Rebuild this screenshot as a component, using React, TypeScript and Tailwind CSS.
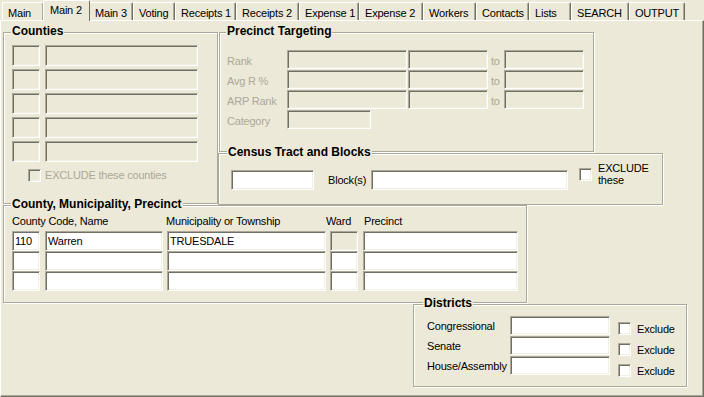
import React from 'react';

const sunken =
  'box-border border border-t-[#ACA899] border-l-[#ACA899] border-r-white border-b-white shadow-[inset_1px_1px_0_#716F64,inset_-1px_-1px_0_#F1EFE2]';

const Field = ({ className = '', value = '', disabled = false }: { className?: string; value?: string; disabled?: boolean }) => (
  <div className={`${sunken} ${disabled ? 'bg-[#ECE9D8]' : 'bg-white'} flex items-center pl-[2px] overflow-hidden ${className}`}>
    {value}
  </div>
);

const Check = ({ disabled = false }: { disabled?: boolean }) => (
  <div className={`${sunken} w-[13px] h-[13px] shrink-0 ${disabled ? 'bg-[#ECE9D8]' : 'bg-white'}`} />
);

const Group = ({
  title,
  className = '',
  titleClass = 'left-[7px]',
  children,
}: {
  title: string;
  className?: string;
  titleClass?: string;
  children?: React.ReactNode;
}) => (
  <div className={`relative box-border border border-[#ACA899] shadow-[inset_1px_1px_0_#fff,1px_1px_0_#fff] ${className}`}>
    <span className={`absolute top-[-9px] px-[1px] bg-[#ECE9D8] font-bold text-[12px] leading-[14px] tracking-normal ${titleClass}`}>
      {title}
    </span>
    {children}
  </div>
);

const tabs = [
  { label: 'Main', w: 'w-[42px]' },
  { label: 'Main 2', w: 'w-[47px]', active: true },
  { label: 'Main 3', w: 'w-[44px]' },
  { label: 'Voting', w: 'w-[42px]' },
  { label: 'Receipts 1', w: 'w-[61px]' },
  { label: 'Receipts 2', w: 'w-[63px]' },
  { label: 'Expense 1', w: 'w-[60px]' },
  { label: 'Expense 2', w: 'w-[64px]' },
  { label: 'Workers', w: 'w-[53px]' },
  { label: 'Contacts', w: 'w-[53px]' },
  { label: 'Lists', w: 'w-[42px]' },
  { label: 'SEARCH', w: 'w-[58px]' },
  { label: 'OUTPUT', w: 'w-[56px]' },
];

const targetRows = ['Rank', 'Avg R %', 'ARP Rank'];

const cmpRows = [
  { code: '110', name: 'Warren', muni: 'TRUESDALE', wardDisabled: true },
  { code: '', name: '', muni: '', wardDisabled: false },
  { code: '', name: '', muni: '', wardDisabled: false },
];

const districts = ['Congressional', 'Senate', 'House/Assembly'];

export default function App() {
  return (
    <div className="w-[704px] h-[397px] overflow-hidden bg-[#ECE9D8] text-black text-[11px] leading-[13px] tracking-[-0.2px] font-['Liberation_Sans',Arial,sans-serif]">
      {/* tab strip */}
      <div className="flex items-end h-[20px] pl-[2px]">
        {tabs.map((t) =>
          t.active ? (
            <div
              key={t.label}
              className={`${t.w} relative z-10 -mx-[1px] mb-[-1px] h-[21px] box-border bg-[#ECE9D8] border-t border-l border-white border-r border-r-[#716F64] rounded-t-[2px] pl-[6px] pt-[3px] whitespace-nowrap`}
            >
              {t.label}
            </div>
          ) : (
            <div
              key={t.label}
              className={`${t.w} h-[18px] box-border border-t border-l border-white border-r border-r-[#716F64] shadow-[inset_-1px_0_0_#ACA899] rounded-t-[2px] pl-[5px] pt-[4px] whitespace-nowrap`}
            >
              {t.label}
            </div>
          )
        )}
      </div>

      {/* tab page */}
      <div className="h-[377px] box-border border border-t-white border-l-white border-r-[#716F64] border-b-[#716F64] shadow-[inset_-1px_-1px_0_#ACA899] pl-[2px] pt-[11px]">
        <div className="flex items-start">
          <Group title="Counties" className="w-[215px] h-[172px] pl-[8px] pt-[12px]">
            <div className="flex flex-col gap-[3px]">
              {[0, 1, 2, 3, 4].map((i) => (
                <div key={i} className="flex gap-[5px]">
                  <Field className="w-[28px] h-[21px]" disabled />
                  <Field className="w-[153px] h-[21px]" disabled />
                </div>
              ))}
            </div>
            <div className="flex items-center gap-[4px] mt-[6px] ml-[16px] text-[#ACA899]">
              <Check disabled />
              <span className="pt-[1px]">EXCLUDE these counties</span>
            </div>
          </Group>

          <div className="flex flex-col">
            <Group title="Precinct Targeting" titleClass="left-[6px]" className="ml-[1px] w-[375px] h-[120px] pl-[7px] pt-[17px]">
              <div className="flex flex-col gap-[1px]">
                {targetRows.map((r) => (
                  <div key={r} className="flex items-center h-[19px]">
                    <span className="w-[60px] pt-[3px] text-[#ACA899]">{r}</span>
                    <Field className="w-[120px] h-[19px]" disabled />
                    <Field className="ml-[1px] w-[80px] h-[19px]" disabled />
                    <span className="w-[16px] pl-[3px] pt-[3px] text-[#ACA899]">to</span>
                    <Field className="w-[80px] h-[19px]" disabled />
                  </div>
                ))}
                <div className="flex items-center h-[19px]">
                  <span className="w-[60px] pt-[3px] text-[#ACA899]">Category</span>
                  <Field className="w-[84px] h-[19px]" disabled />
                </div>
              </div>
            </Group>

            <Group title="Census Tract and Blocks" titleClass="left-[8px]" className="mt-[1px] w-[445px] h-[52px] pl-[12px] pt-[8px]">
              <div className="flex items-start">
                <Field className="mt-[8px] w-[83px] h-[20px]" />
                <span className="mt-[12px] ml-[14px] w-[43px]">Block(s)</span>
                <Field className="mt-[8px] w-[197px] h-[20px]" />
                <div className="mt-[6px] ml-[11px]">
                  <Check />
                </div>
                <span className="ml-[6px] leading-[12px]">
                  EXCLUDE
                  <br />
                  these
                </span>
              </div>
            </Group>
          </div>
        </div>

        <Group title="County, Municipality, Precinct" className="w-[524px] h-[98px] pl-[8px] pt-[9px]">
          <div className="flex h-[16px]">
            <span className="w-[154px]">County Code, Name</span>
            <span className="w-[160px]">Municipality or Township</span>
            <span className="w-[38px]">Ward</span>
            <span>Precinct</span>
          </div>
          {cmpRows.map((r, i) => (
            <div key={i} className="flex">
              <Field className="w-[28px] h-[20px]" value={r.code} />
              <Field className="ml-[5px] w-[118px] h-[20px]" value={r.name} />
              <Field className="ml-[4px] w-[159px] h-[20px]" value={r.muni} />
              <Field className="ml-[4px] w-[28px] h-[20px]" disabled={r.wardDisabled} />
              <Field className="ml-[5px] w-[155px] h-[20px]" />
            </div>
          ))}
        </Group>

        <Group title="Districts" titleClass="left-[9px]" className="mt-[1px] ml-[410px] w-[274px] h-[83px] pl-[13px] pt-[11px]">
          <div className="flex items-start">
            <div className="flex flex-col gap-[1px]">
              {districts.map((d) => (
                <div key={d} className="flex items-center h-[19px]">
                  <span className="w-[83px] pt-[2px]">{d}</span>
                  <Field className="w-[100px] h-[19px]" />
                </div>
              ))}
            </div>
            <div className="flex flex-col gap-[8px] mt-[6px] ml-[8px]">
              {districts.map((d) => (
                <div key={d} className="flex items-center h-[13px]">
                  <Check />
                  <span className="ml-[6px] pt-[1px]">Exclude</span>
                </div>
              ))}
            </div>
          </div>
        </Group>
      </div>
    </div>
  );
}
